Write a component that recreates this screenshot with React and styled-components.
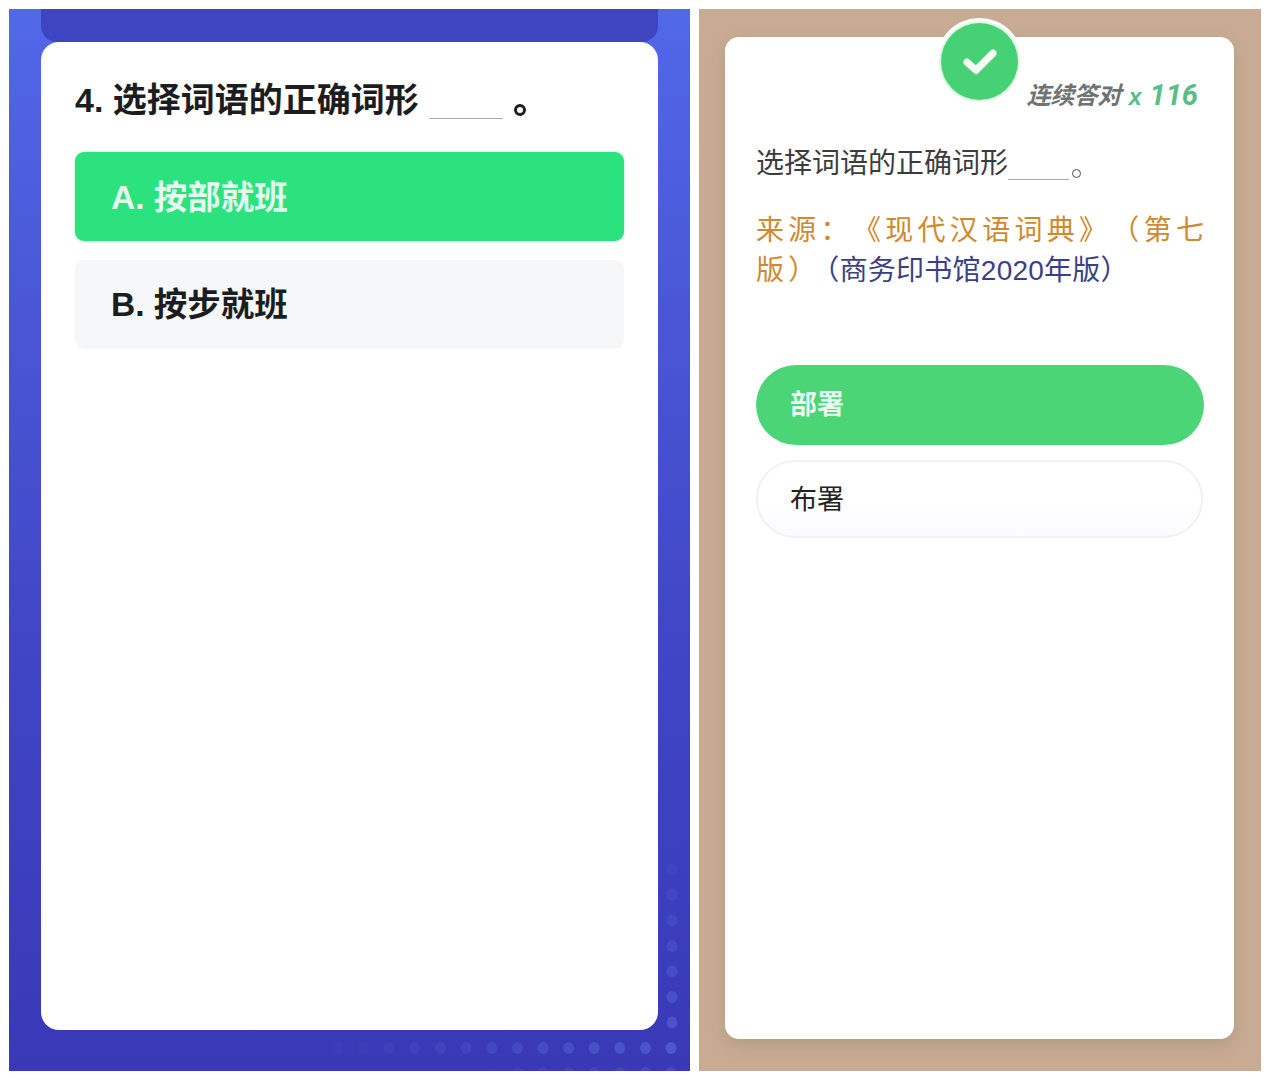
import React from 'react';
import styled, { createGlobalStyle } from 'styled-components';

const Global = createGlobalStyle`
  html, body {
    margin: 0;
    padding: 0;
    background: #fff;
  }
  body {
    font-family: "Liberation Sans", "Noto Sans CJK SC", sans-serif;
  }
`;

const Page = styled.div`
  width: 1270px;
  height: 1080px;
  box-sizing: border-box;
  padding: 9px;
  display: grid;
  grid-template-columns: 681px 562px;
  gap: 9px;
`;

const BluePanel = styled.section`
  position: relative;
  overflow: hidden;
  height: 1062px;
  box-sizing: border-box;
  padding: 0 32px;
  display: flex;
  flex-direction: column;
  background: linear-gradient(180deg, #5168e8 0%, #4a59d8 25%, #4046c6 60%, #3939b6 100%);
`;

const Tab = styled.div`
  flex: none;
  height: 33px;
  border-radius: 0 0 16px 16px;
  background: #3f45c0;
`;

const QuizCard = styled.div`
  position: relative;
  z-index: 1;
  height: 988px;
  box-sizing: border-box;
  padding: 34px 34px 0;
  border-radius: 18px;
  background: #fff;
`;

const QuizTitle = styled.h1`
  margin: 0 0 30px;
  height: 46px;
  display: flex;
  align-items: flex-end;
  font-size: 34px;
  line-height: 44px;
  font-weight: 700;
  color: #1c1d21;
  white-space: nowrap;
`;

const Blank = styled.span`
  display: inline-block;
  width: ${props => props.$width}px;
  height: 1px;
  margin: 0 ${props => props.$after}px ${props => props.$bottom}px ${props => props.$before}px;
  background: #a9abb0;
`;

const Period = styled.span`
  display: inline-block;
  width: ${props => props.$size}px;
  height: ${props => props.$size}px;
  box-sizing: border-box;
  margin-bottom: ${props => props.$bottom}px;
  border: ${props => props.$border}px solid ${props => props.$color};
  border-radius: 50%;
`;

const OptionList = styled.div`
  display: flex;
  flex-direction: column;
  gap: 19px;
`;

const Option = styled.div`
  height: 89px;
  box-sizing: border-box;
  padding: 0 0 ${props => (props.$active ? 5 : 7)}px 36px;
  display: flex;
  align-items: center;
  border-radius: 9px;
  font-size: 33.5px;
  font-weight: 700;
  background: ${props => (props.$active ? '#2be27f' : '#f6f7f9')};
  color: ${props => (props.$active ? '#e4fbef' : '#1c1d21')};
  box-shadow: ${props => (props.$active ? '0 0 3px #a5f3c8' : 'none')};
`;

const Dots = styled.svg`
  position: absolute;
  left: 0;
  top: 0;
  width: 681px;
  height: 1062px;
`;

const TanPanel = styled.section`
  height: 1062px;
  box-sizing: border-box;
  padding: 28px 27px 32px 26px;
  background: #c8ab92;
`;

const ResultCard = styled.div`
  position: relative;
  height: 1002px;
  box-sizing: border-box;
  padding: 0 30px 0 31px;
  border-radius: 14px;
  background: #fff;
  box-shadow: 0 6px 14px rgba(150, 140, 110, 0.45);
`;

const Badge = styled.div`
  position: absolute;
  left: 216px;
  top: -14px;
  width: 77px;
  height: 77px;
  display: flex;
  align-items: center;
  justify-content: center;
  border-radius: 50%;
  background: #46d174;
  box-shadow: 0 0 0 2px #dff8e6, 0 0 0 5px #fff;
`;

const Streak = styled.div`
  height: 75px;
  display: flex;
  justify-content: flex-end;
  align-items: flex-end;
  gap: 8px;
  padding-right: 6px;
  font-style: italic;
  font-weight: 700;
  white-space: nowrap;
`;

const StreakLabel = styled.span`
  font-size: 24px;
  line-height: 32px;
  letter-spacing: -0.5px;
  color: #6f7472;
`;

const StreakCount = styled.span`
  font-family: "Roboto", "Liberation Sans", sans-serif;
  font-size: 29px;
  line-height: 34px;
  color: #58bd8a;
`;

const Multiply = styled.span`
  font-size: 23px;
  line-height: 30px;
  color: #58bd8a;
`;

const Question = styled.p`
  margin: 32px 0 0;
  height: 40px;
  display: flex;
  align-items: flex-end;
  font-size: 28px;
  line-height: 40px;
  color: #3a3c40;
  white-space: nowrap;
`;

const Source = styled.p`
  margin: 27px -4px 0 0;
  font-size: 28px;
  line-height: 40px;
  text-align: justify;
`;

const Orange = styled.span`
  color: #d08a2e;
  letter-spacing: ${props => props.$spacing}px;
  text-spacing-trim: ${props => (props.$untrimmed ? 'space-all' : 'normal')};
`;

const Navy = styled.span`
  color: #3d3f85;
  letter-spacing: 0.25px;
`;

const Choices = styled.div`
  margin-top: 74px;
  display: flex;
  flex-direction: column;
  gap: 15px;
`;

const Choice = styled.div`
  height: ${props => (props.$active ? 80 : 78)}px;
  box-sizing: border-box;
  padding: 0 0 ${props => (props.$active ? 6 : 4)}px ${props => (props.$active ? 34 : 32)}px;
  display: flex;
  align-items: center;
  border-radius: 40px;
  font-size: 27px;
  font-weight: ${props => (props.$active ? 700 : 400)};
  color: ${props => (props.$active ? '#eafbf0' : '#222')};
  background: ${props => (props.$active ? '#4bd577' : 'linear-gradient(180deg, #fff 50%, #fbfafe 100%)')};
  border: ${props => (props.$active ? 'none' : '2px solid #f1f1f3')};
  margin-right: ${props => (props.$active ? 0 : 1)}px;
`;

// bottom row and right column of the dot texture on the blue panel
const bottomDots = Array.from({ length: 14 }, (_, i) => ({
  x: 662 - i * 25.6,
  y: 1039,
  o: Math.max(0.05, 0.38 - i * 0.027),
}));
const sideDots = Array.from({ length: 8 }, (_, i) => ({
  x: 663,
  y: 1013.5 - i * 25.5,
  o: Math.max(0.04, 0.32 - i * 0.04),
}));
const lowerDots = Array.from({ length: 8 }, (_, i) => ({
  x: 662 - i * 25.6,
  y: 1064,
  o: 0.25 - i * 0.025,
}));

const App = () => (
  <>
    <Global />
    <Page>
      <BluePanel>
        <Dots viewBox="0 0 681 1062">
          {[...bottomDots, ...sideDots, ...lowerDots].map(d => (
            <ellipse key={`${d.x}-${d.y}`} cx={d.x} cy={d.y} rx="5.5" ry="6" fill="#6a86ea" opacity={d.o} />
          ))}
        </Dots>
        <Tab />
        <QuizCard>
          <QuizTitle>
            4. 选择词语的正确词形
            <Blank $width={74} $before={10} $after={11} $bottom={3} />
            <Period $size={12} $border={3} $color="#1c1d21" $bottom={6} />
          </QuizTitle>
          <OptionList>
            <Option $active>A. 按部就班</Option>
            <Option>B. 按步就班</Option>
          </OptionList>
        </QuizCard>
      </BluePanel>
      <TanPanel>
        <ResultCard>
          <Badge>
            <svg width="36" height="30" viewBox="0 0 36 30" fill="none">
              <path d="M5 15 L14 23 L31 6" stroke="#c2c9b8" strokeWidth="7" strokeLinecap="round" strokeLinejoin="round" transform="translate(0 1.5)" opacity="0.6" />
              <path d="M5 15 L14 23 L31 6" stroke="#f3fbf4" strokeWidth="7" strokeLinecap="round" strokeLinejoin="round" />
            </svg>
          </Badge>
          <Streak>
            <StreakLabel>连续答对</StreakLabel>
            <Multiply>x</Multiply>
            <StreakCount>116</StreakCount>
          </Streak>
          <Question>
            选择词语的正确词形
            <Blank $width={61} $before={0} $after={3} $bottom={4} />
            <Period $size={9} $border={1} $color="#4a4c50" $bottom={6} />
          </Question>
          <Source>
            <Orange $spacing={4} $untrimmed>来源：《现代汉语词典》（第七</Orange>
            <Orange $spacing={4.3}>版</Orange>
            <Orange $spacing={9}>）</Orange>
            <Navy>（商务印书馆2020年版）</Navy>
          </Source>
          <Choices>
            <Choice $active>部署</Choice>
            <Choice>布署</Choice>
          </Choices>
        </ResultCard>
      </TanPanel>
    </Page>
  </>
);

export default App;
